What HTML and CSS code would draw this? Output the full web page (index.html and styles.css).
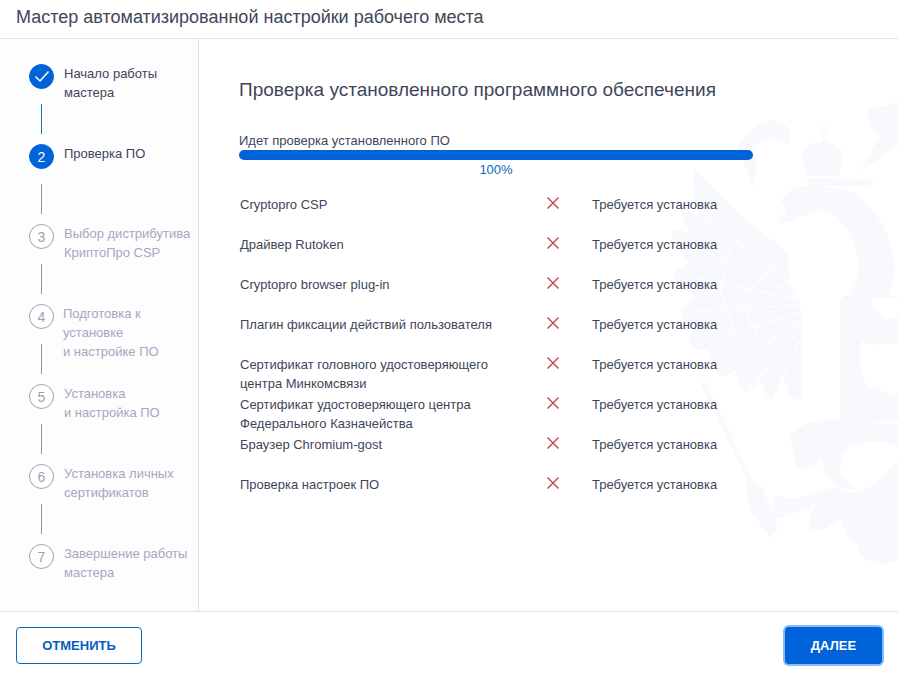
FILE: index.html
```html
<!DOCTYPE html>
<html lang="ru">
<head>
<meta charset="utf-8">
<title>Мастер автоматизированной настройки рабочего места</title>
<link rel="stylesheet" href="styles.css">
</head>
<body>
<div class="wizard">
  <header class="wizard-header">Мастер автоматизированной настройки рабочего места</header>
  <div class="wizard-body">
    <nav class="steps">
      <div class="step step-done">
        <div class="marker">
          <span class="circle"><svg width="16" height="13" viewBox="0 0 16 13"><path d="M1.5 6.5L6 11L14.5 1.5" fill="none" stroke="#fff" stroke-width="1.5"/></svg></span>
          <span class="connector"></span>
        </div>
        <div class="label">Начало работы<br>мастера</div>
      </div>
      <div class="step step-active">
        <div class="marker"><span class="circle">2</span><span class="connector"></span></div>
        <div class="label">Проверка ПО</div>
      </div>
      <div class="step">
        <div class="marker"><span class="circle">3</span><span class="connector"></span></div>
        <div class="label">Выбор дистрибутива<br>КриптоПро CSP</div>
      </div>
      <div class="step">
        <div class="marker"><span class="circle">4</span><span class="connector"></span></div>
        <div class="label label-shift">Подготовка к<br>установке<br>и настройке ПО</div>
      </div>
      <div class="step">
        <div class="marker"><span class="circle">5</span><span class="connector"></span></div>
        <div class="label">Установка<br>и настройка ПО</div>
      </div>
      <div class="step">
        <div class="marker"><span class="circle">6</span><span class="connector"></span></div>
        <div class="label">Установка личных<br>сертификатов</div>
      </div>
      <div class="step">
        <div class="marker"><span class="circle">7</span></div>
        <div class="label">Завершение работы<br>мастера</div>
      </div>
    </nav>
    <main class="content">
      <svg class="emblem" width="238" height="470" viewBox="660 100 238 470">
        <g class="emblem-fill">
          <path d="M694 168L740 215L800 262L802 398Q796 402 790 396L782 372Q776 402 768 398L760 380Q750 396 742 390L735 370Q722 382 716 372L708 350Q692 350 688 340L695 325Q680 322 682 310L695 295Q672 285 674 272L690 262Q670 245 672 230L690 232Q678 210 680 205L700 218Q690 190 694 168Z"/>
          <path d="M737 146C748 130 762 120 775 120C788 122 792 135 790 145L782 142C770 135 758 140 750 150C760 160 758 175 752 188C748 172 742 158 737 146Z"/>
          <path d="M802 160C800 145 815 142 822 142C832 142 845 148 843 160L838 176H808Z"/>
          <path d="M822 125h3v5h4v2h-4v9h-3v-9h-4v-2h4z"/>
          <path d="M806 178L875 180L868 186H812Z"/>
          <path d="M898 102L868 110C866 122 872 130 880 135L860 172C870 165 890 150 898 145Z"/>
          <path d="M780 204C785 190 800 184 815 186L850 190C875 205 893 235 895 270L890 296H850C865 270 858 235 835 215C818 205 800 218 790 222L776 225L782 215C790 212 786 206 780 204Z"/>
          <path d="M840 296H898V420L850 424L840 422Z"/>
          <path d="M790 435C800 425 815 418 840 420L898 425V445C880 440 860 440 845 450C835 465 842 485 858 487C845 495 822 480 822 460C815 465 805 468 797 470Z"/>
          <path d="M808 530C810 505 825 490 845 490C860 500 880 480 898 460V560C880 570 860 560 858 545C850 545 845 530 840 520C830 525 820 535 808 530Z"/>
          <path d="M775 495C795 505 820 490 842 485L838 495C815 505 790 515 772 520Z"/>
          <path d="M745 480L762 486L778 530L770 538L750 510Z"/>
        </g>
        <path class="emblem-scepter" d="M703 383L755 490"/>
        <g class="emblem-lines">
          <path d="M800 290L690 205M800 296L680 240M800 300L682 275M800 305L688 312M800 312L695 345M800 320L722 375M800 330L748 390M800 340L774 396"/>
          <path d="M770 270L740 300L760 340M730 250L720 290L735 335"/>
        </g>
        <g class="emblem-cut">
          <ellipse cx="820" cy="265" rx="32" ry="46"/>
          <path d="M862 340C875 350 885 340 898 345V395C885 400 875 380 870 390C860 380 858 355 862 340Z"/>
          <path d="M870 298H898V316C890 322 876 318 870 298Z"/>
        </g>
      </svg>
      <h1 class="title">Проверка установленного программного обеспечения</h1>
      <div class="progress-label">Идет проверка установленного ПО</div>
      <div class="progress"><div class="progress-fill"></div></div>
      <div class="progress-value">100%</div>
      <div class="checks">
        <div class="check"><div class="check-name">Cryptopro CSP</div><svg class="cross" width="14" height="14" viewBox="0 0 14 14"><path d="M1.5 1.5L12.5 12.5M12.5 1.5L1.5 12.5"/></svg><div class="check-status">Требуется установка</div></div>
        <div class="check"><div class="check-name">Драйвер Rutoken</div><svg class="cross" width="14" height="14" viewBox="0 0 14 14"><path d="M1.5 1.5L12.5 12.5M12.5 1.5L1.5 12.5"/></svg><div class="check-status">Требуется установка</div></div>
        <div class="check"><div class="check-name">Cryptopro browser plug-in</div><svg class="cross" width="14" height="14" viewBox="0 0 14 14"><path d="M1.5 1.5L12.5 12.5M12.5 1.5L1.5 12.5"/></svg><div class="check-status">Требуется установка</div></div>
        <div class="check"><div class="check-name">Плагин фиксации действий пользователя</div><svg class="cross" width="14" height="14" viewBox="0 0 14 14"><path d="M1.5 1.5L12.5 12.5M12.5 1.5L1.5 12.5"/></svg><div class="check-status">Требуется установка</div></div>
        <div class="check"><div class="check-name">Сертификат головного удостоверяющего центра Минкомсвязи</div><svg class="cross" width="14" height="14" viewBox="0 0 14 14"><path d="M1.5 1.5L12.5 12.5M12.5 1.5L1.5 12.5"/></svg><div class="check-status">Требуется установка</div></div>
        <div class="check"><div class="check-name">Сертификат удостоверяющего центра Федерального Казначейства</div><svg class="cross" width="14" height="14" viewBox="0 0 14 14"><path d="M1.5 1.5L12.5 12.5M12.5 1.5L1.5 12.5"/></svg><div class="check-status">Требуется установка</div></div>
        <div class="check"><div class="check-name">Браузер Chromium-gost</div><svg class="cross" width="14" height="14" viewBox="0 0 14 14"><path d="M1.5 1.5L12.5 12.5M12.5 1.5L1.5 12.5"/></svg><div class="check-status">Требуется установка</div></div>
        <div class="check"><div class="check-name">Проверка настроек ПО</div><svg class="cross" width="14" height="14" viewBox="0 0 14 14"><path d="M1.5 1.5L12.5 12.5M12.5 1.5L1.5 12.5"/></svg><div class="check-status">Требуется установка</div></div>
      </div>
    </main>
  </div>
  <footer class="wizard-footer">
    <button class="btn btn-outline">ОТМЕНИТЬ</button>
    <button class="btn btn-primary">ДАЛЕЕ</button>
  </footer>
</div>
</body>
</html>
```
FILE: styles.css
```css
* { box-sizing: border-box; }
html, body { margin: 0; height: 100%; }
body { font-family: "Liberation Sans", Arial, sans-serif; color: #404659; background: #fff; overflow: hidden; }
.wizard { display: flex; flex-direction: column; height: 674px; }
.wizard-header { height: 39px; flex: none; padding: 5px 16px 0; font-size: 18px; line-height: 24px; border-bottom: 1px solid #e3e5e9; }
.wizard-body { flex: 1; display: flex; min-height: 0; }
.steps { width: 199px; flex: none; padding: 25px 0 0 29px; background: #fdfdfe; border-right: 1px solid #dfe1e6; }
.step { display: flex; height: 80px; gap: 10px; color: #a4a9bd; }
.marker { width: 25px; flex: none; display: flex; flex-direction: column; align-items: center; }
.circle { width: 25px; height: 25px; flex: none; border-radius: 50%; border: 1px solid #9da1b0; display: flex; align-items: center; justify-content: center; font-size: 14px; color: #9da1b0; background: #fff; }
.connector { width: 1px; height: 30px; margin-top: 15px; background: #9094a6; flex: none; }
.step-done, .step-active { color: #404659; }
.step-done .circle, .step-active .circle { background: #0063d9; border-color: #0063d9; color: #fff; }
.step-done .connector { background: #1273b5; }
.label { font-size: 13px; line-height: 19px; white-space: nowrap; }
.label-shift { margin-left: -1px; }
.content { flex: 1; position: relative; padding: 38px 0 0 40px; overflow: hidden; background: #fff; }
.emblem { position: absolute; left: 461px; top: 61px; }
.emblem-fill { fill: #f7f9fc; }
.emblem-scepter { fill: none; stroke: #f7f9fc; stroke-width: 5; }
.emblem-lines { fill: none; stroke: #fff; stroke-width: 1.2; }
.emblem-cut { fill: #fff; }
.title { position: relative; margin: 0; font-size: 19px; line-height: 26px; font-weight: 400; }
.progress-label { position: relative; margin-top: 30px; font-size: 13px; line-height: 16px; }
.progress { position: relative; width: 514px; height: 10px; margin-top: 1px; border-radius: 5px; background: #dfe1e6; overflow: hidden; }
.progress-fill { width: 100%; height: 100%; background: #0063d9; }
.progress-value { position: relative; width: 514px; margin-top: 1px; text-align: center; font-size: 13px; line-height: 18px; color: #0b6ab8; }
.checks { position: relative; margin-top: 16px; padding-left: 1px; }
.check { display: flex; height: 40px; font-size: 13px; line-height: 19px; }
.check-name { width: 306px; flex: none; padding-right: 40px; }
.cross { flex: none; margin-top: 1px; }
.cross path { fill: none; stroke: #c4565f; stroke-width: 1.6; }
.check-status { margin-left: 32px; }
.wizard-footer { height: 63px; flex: none; display: flex; justify-content: space-between; align-items: flex-start; padding: 15px 16px 0; border-top: 1px solid #dfe1e6; }
.btn { height: 37px; font-family: inherit; font-size: 13px; font-weight: 700; border-radius: 4px; cursor: pointer; padding: 0; }
.btn-outline { width: 126px; background: #fff; color: #0b5cc0; border: 1px solid #0b6ab8; }
.btn-primary { width: 97px; background: #0063d9; color: #fff; border: 0; box-shadow: 0 0 0 2px #84bdf9; }
```
